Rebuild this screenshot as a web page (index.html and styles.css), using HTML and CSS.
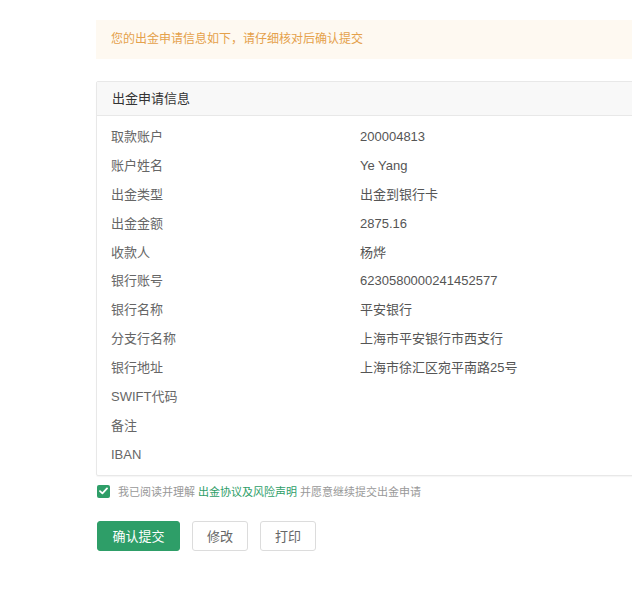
FILE: index.html
```html
<!DOCTYPE html>
<html lang="zh-CN">
<head>
<meta charset="utf-8">
<title>出金申请信息</title>
<link rel="stylesheet" href="styles.css">
</head>
<body>
<div class="page">
  <div class="notice">您的出金申请信息如下，请仔细核对后确认提交</div>
  <div class="card">
    <div class="card-head">出金申请信息</div>
    <div class="card-body">
      <div class="row"><span class="label">取款账户</span><span class="value">200004813</span></div>
      <div class="row"><span class="label">账户姓名</span><span class="value">Ye Yang</span></div>
      <div class="row"><span class="label">出金类型</span><span class="value">出金到银行卡</span></div>
      <div class="row"><span class="label">出金金额</span><span class="value">2875.16</span></div>
      <div class="row"><span class="label">收款人</span><span class="value">杨烨</span></div>
      <div class="row"><span class="label">银行账号</span><span class="value">6230580000241452577</span></div>
      <div class="row"><span class="label">银行名称</span><span class="value">平安银行</span></div>
      <div class="row"><span class="label">分支行名称</span><span class="value">上海市平安银行市西支行</span></div>
      <div class="row"><span class="label">银行地址</span><span class="value">上海市徐汇区宛平南路25号</span></div>
      <div class="row"><span class="label">SWIFT代码</span><span class="value"></span></div>
      <div class="row"><span class="label">备注</span><span class="value"></span></div>
      <div class="row"><span class="label">IBAN</span><span class="value"></span></div>
    </div>
  </div>
  <label class="agree">
    <span class="check"><svg width="9" height="8" viewBox="0 0 9 8"><path d="M1 4.2 L3.4 6.4 L8 1.4" fill="none" stroke="#fff" stroke-width="1.8" stroke-linecap="round" stroke-linejoin="round"/></svg></span>
    <span class="agree-text">我已阅读并理解 <a class="link">出金协议及风险声明</a> 并愿意继续提交出金申请</span>
  </label>
  <div class="actions">
    <button class="btn btn-primary">确认提交</button>
    <button class="btn btn-default btn-edit">修改</button>
    <button class="btn btn-default btn-print">打印</button>
  </div>
</div>
</body>
</html>
```
FILE: styles.css
```css
html, body {
  margin: 0;
  padding: 0;
  background: #fff;
  overflow: hidden;
}
body {
  font-family: "Liberation Sans", "Noto Sans CJK SC", sans-serif;
  color: #333;
}
.page {
  margin-left: 96px;
  padding-top: 20px;
  width: 700px;
}
.notice {
  height: 39px;
  line-height: 39px;
  background: #fef9f1;
  color: #e5a14b;
  font-size: 12px;
  padding-left: 15px;
}
.card {
  margin-top: 22px;
  border: 1px solid #e8e8e8;
  border-radius: 2px;
  box-shadow: 0 1px 1px rgba(0, 0, 0, 0.04);
}
.card-head {
  height: 33px;
  line-height: 33px;
  background: #f8f8f8;
  border-bottom: 1px solid #e8e8e8;
  padding-left: 15px;
  font-size: 13px;
  color: #333;
}
.card-body {
  padding: 7px 0 5px 0;
}
.row {
  display: flex;
  height: 28.9px;
  line-height: 28.9px;
  font-size: 13px;
}
.label {
  width: 249px;
  padding-left: 14px;
  color: #666;
}
.value {
  color: #555;
}
.agree {
  display: flex;
  align-items: center;
  margin-top: 8px;
  margin-left: 1px;
  height: 15px;
  font-size: 11px;
  color: #999;
}
.check {
  width: 13px;
  height: 13px;
  background: #2e9e68;
  border-radius: 2px;
  display: flex;
  align-items: center;
  justify-content: center;
  margin-right: 8px;
}
.link {
  color: #2e9e68;
}
.actions {
  display: flex;
  gap: 12px;
  margin-top: 22px;
  margin-left: 1px;
}
.btn {
  height: 30px;
  font-family: "Liberation Sans", "Noto Sans CJK SC", sans-serif;
  font-size: 13px;
  border-radius: 3px;
  padding: 0;
  cursor: pointer;
}
.btn-primary {
  width: 83px;
  background: #2e9e68;
  border: 1px solid #2e9e68;
  color: #fff;
}
.btn-default {
  width: 56px;
  background: #fff;
  border: 1px solid #dcdcdc;
  color: #666;
}
```
